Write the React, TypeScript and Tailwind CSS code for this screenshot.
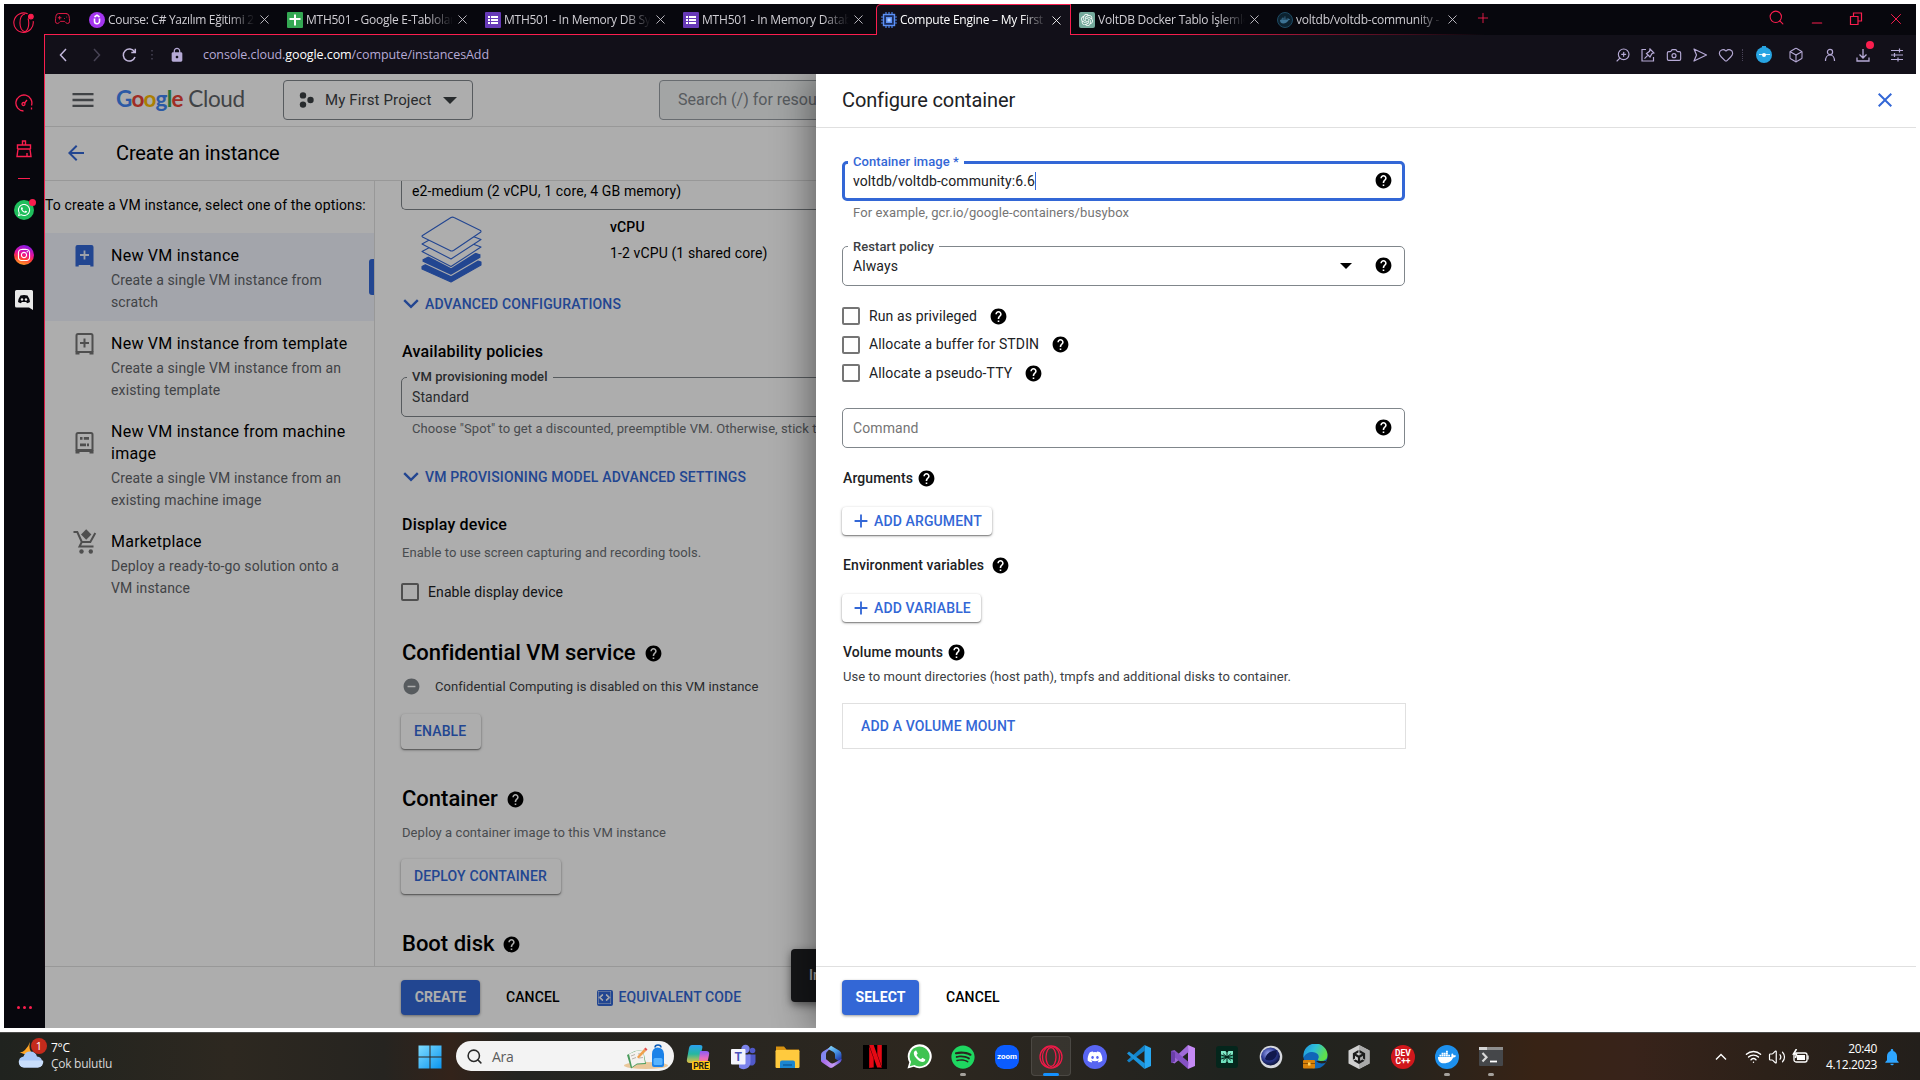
import React, { ReactNode } from "react";
import {
  MdHelp, MdMenu, MdArrowBack, MdClose, MdAdd, MdRemoveCircle, MdCode, MdLock, MdNotifications,
} from "react-icons/md";
import { FaWhatsapp, FaDiscord, FaSpotify, FaDocker, FaInstagram, FaUnity } from "react-icons/fa6";
import { SiNetflix, SiOpenai } from "react-icons/si";
import {
  Search, Copy, Minus, X, Plus, ZoomIn, Camera, SendHorizontal, Heart, Box, UserRound, Gamepad2, Wifi, Volume2,
} from "lucide-react";

/* ---------- shared bits ---------- */

const Help = ({ className = "" }: { className?: string }) => (
  <MdHelp size={19} className={"shrink-0 text-black " + className} />
);

const Checkbox = () => <span className="h-[18px] w-[18px] shrink-0 rounded-[2px] border-2 border-[#757575]" />;

const Chevron = () => (
  <svg width="16" height="10" viewBox="0 0 16 10" className="shrink-0">
    <path d="M1.2 1.2 8 7.800l6.800-6.600" fill="none" stroke="#3367d6" strokeWidth="2.400" />
  </svg>
);

/* ---------- browser side bar ---------- */

const OperaGx = ({ size }: { size: number }) => (
  <svg width={size} height={size} viewBox="0 0 24 24" fill="none" stroke="#fa1e4e" strokeWidth="1.200">
    <path d="M16 2A10.600 10.600 0 1 0 22 10" />
    <path d="M13 2.200C8.600 3 7.600 8 7.600 12s1.500 8.400 5.400 9.600" />
    <path d="M13 21.600c3.400-1.500 4.200-6 4.200-9.600 0-2-.2-3.600-.8-5" />
    <circle cx="19.500" cy="5" r="2.600" fill="#fa1e4e" />
  </svg>
);

function SideBar() {
  return (
    <div className="flex w-10 shrink-0 flex-col items-center bg-[#07070d] text-[#fa1e4e]">
      <div className="mt-[8px] h-[22px]"><OperaGx size={22} /></div>
      <svg className="mt-[60px]" width="18" height="18" viewBox="0 0 18 18" fill="none" stroke="#fa1e4e" strokeWidth="1.300">
        <path d="M8.500 17A8 8 0 1 1 16.500 11.500" /><circle cx="8.500" cy="10" r="1.500" /><path d="m9.500 9 2.500-3M16.500 13.500v2" />
      </svg>
      <svg className="mt-[28px]" width="16" height="18" viewBox="0 0 16 18" fill="none" stroke="#fa1e4e" strokeWidth="1.400">
        <path d="M6.500 5V1h3v4M1.500 9V5h13v4M1.500 9h13M2 9l-1 7.500h14L14 9M11 16.500V13" />
      </svg>
      <div className="mt-[20px] h-px w-3 bg-[#fa1e4e]" />
      <div className="relative mt-[21px] flex h-5 w-5 items-center justify-center rounded-full bg-[#1fbe5c]">
        <FaWhatsapp size={14} className="text-white" />
        <span className="absolute -right-[2px] -top-[1px] h-[7px] w-[7px] rounded-full bg-[#fa1e4e]" />
      </div>
      <div className="mt-[25px] flex h-5 w-5 items-center justify-center rounded-full bg-[linear-gradient(195deg,#7a1af0_5%,#e8139a_45%,#ff3a3a_65%,#ffc020)]">
        <FaInstagram size={14} className="text-white" />
      </div>
      <svg className="mt-[25px]" width="18" height="20" viewBox="0 0 18 20">
        <path d="M1.500 0h15A1.500 1.500 0 0 1 18 1.500V20l-4-2.500H1.500A1.500 1.500 0 0 1 0 16v-14.500A1.500 1.500 0 0 1 1.500 0Z" fill="#e8e8e8" />
        <path d="M5.500 5.500Q9 4.500 12.500 5.500 14.700 8.500 15 12q-1.500 1-3 1.200l-.8-1.200H6.800L6 13.200Q4.500 13 3 12 3.300 8.500 5.500 5.500Z" fill="#07070d" />
        <circle cx="7" cy="9.500" r="1.200" fill="#e8e8e8" /><circle cx="11" cy="9.500" r="1.200" fill="#e8e8e8" />
      </svg>
      <div className="mb-[19px] mt-auto flex gap-[3px]">
        {[0, 1, 2].map((i) => <span key={i} className="h-[3px] w-[3px] rounded-full bg-[#fa1e4e]" />)}
      </div>
    </div>
  );
}

/* ---------- tab strip ---------- */

const ListIcon = () => (
  <svg width="16" height="16" viewBox="0 0 16 16">
    <rect width="16" height="16" rx="1" fill="#673ab7" />
    <path d="M3 4h2v2H3zm0 3h2v2H3zm0 3h2v2H3zm3-6h7v2H6zm0 3h7v2H6zm0 3h7v2H6z" fill="#fff" />
  </svg>
);

const tabs: { title: string; icon: ReactNode; active?: boolean; spacing: string }[] = [
  {
    title: "Course: C# Yazılım Eğitimi 2", spacing: "tracking-[-0.3px]",
    icon: (
      <span className="flex h-4 w-4 items-center justify-center rounded-full bg-[#a435f0]">
        <svg width="8" height="11" viewBox="0 0 8 11" fill="none" stroke="#fff" strokeWidth="1.600">
          <path d="M1.500 4.500v2.700a2.500 2.500 0 0 0 5 0V4.500M1.500 3 4 1.200 6.500 3" />
        </svg>
      </span>
    ),
  },
  {
    title: "MTH501 - Google E-Tablolar", spacing: "tracking-[-0.26px]",
    icon: (
      <svg width="16" height="16" viewBox="0 0 16 16">
        <rect width="16" height="16" rx="1" fill="#34a853" /><path d="M7 2.500h2V6h4.500v2H9v5.500H7V8H2.500V6H7z" fill="#fff" />
      </svg>
    ),
  },
  { title: "MTH501 - In Memory DB Systems", spacing: "tracking-[-0.26px]", icon: <ListIcon /> },
  { title: "MTH501 - In Memory Database", spacing: "tracking-[-0.2px]", icon: <ListIcon /> },
  {
    title: "Compute Engine – My First Project", active: true, spacing: "tracking-[-0.23px]",
    icon: (
      <svg width="16" height="16" viewBox="0 0 16 16" fill="none">
        <path d="M5 0v16M8 0v16M11 0v16M0 5h16M0 8h16M0 11h16" stroke="#4a80e8" strokeWidth="1.200" />
        <rect x="2.500" y="2.500" width="11" height="11" fill="#1b2c5c" stroke="#5b90f5" strokeWidth="1.400" />
        <rect x="5" y="5" width="6" height="6" fill="#5b90f5" /><rect x="6.500" y="6.500" width="3" height="3" fill="#aecbfa" />
      </svg>
    ),
  },
  {
    title: "VoltDB Docker Tablo İşlemleri", spacing: "tracking-[-0.24px]",
    icon: <span className="flex h-4 w-4 items-center justify-center rounded-[2px] bg-[#74aa9c]"><SiOpenai size={12} color="#fff" /></span>,
  },
  {
    title: "voltdb/voltdb-community - Docker", spacing: "tracking-[-0.23px]",
    icon: <span className="flex h-4 w-4 items-center justify-center rounded-full border border-[#1d4a63] bg-[#0c2230]"><FaDocker size={10} color="#3d7395" /></span>,
  },
];

function TabStrip() {
  return (
    <div className="relative flex h-[31px] bg-[#07070d]">
      <div className="absolute inset-x-0 bottom-0 h-px bg-[linear-gradient(90deg,#fa1e4e_60%,#fa1e4e00_77%)]" />
      <Gamepad2 size={17} strokeWidth={1.400} className="ml-[10px] mr-[10px] mt-[6px] text-[#e01a46]" />
      {tabs.map((t) => (
        <div
          key={t.title}
          className={
            "relative flex shrink-0 items-center " +
            (t.active
              ? "ml-[3px] h-[31px] w-[195px] rounded-tl-[5px] border-l border-r border-t border-[#fa1e4e] bg-[#121019] pl-[4px] text-white"
              : "h-[31px] w-[198px] pl-2 text-[#cfcdd3]")
          }
        >
          {t.icon}
          <span
            className={
              "ml-[3px] w-[147px] shrink-0 overflow-hidden whitespace-nowrap font-['Open_Sans',sans-serif] text-[12px] [mask-image:linear-gradient(90deg,#000_82%,transparent_100%)] " + t.spacing
            }
          >
            {t.title}
          </span>
          <X size={15} strokeWidth={1.400} className="ml-[2px] shrink-0" />
        </div>
      ))}
      <Plus size={16} strokeWidth={1.300} className="ml-[8px] mt-[6px] text-[#fa1e4e]" />
      <div className="ml-auto mr-[12px] flex items-center gap-[24px] pb-[1px] text-[#fa1e4e]">
        <Search size={17} strokeWidth={1.500} className="-mt-[3px]" />
        <Minus size={16} strokeWidth={1.800} className="translate-y-[4px]" />
        <svg width="14" height="14" viewBox="0 0 14 14" fill="none" stroke="currentColor" strokeWidth="1.200">
          <path d="M1.500 4.500h7.500v8h-7.500zM4.500 4.500v-3.500h8v8H9" />
        </svg>
        <X size={18} strokeWidth={1.300} className="-mr-[1px]" />
      </div>
    </div>
  );
}

function AddressBar() {
  return (
    <div className="flex h-[39px] items-center bg-[#121019] text-[#b6aad6]">
      <svg width="114" height="16" viewBox="0 0 114 16" fill="none" stroke="#c3b8dd" strokeWidth="1.500" className="-mr-[4px] ml-[14px]">
        <path d="M7 2 1.500 8 7 14" />
        <path d="m35 2 5.500 6L35 14" opacity=".3" />
        <path d="M75.500 5A6 6 0 1 0 76 10M76.300 1.800v3.800h-4" />
        <path d="M93 3v10" strokeDasharray="1.500 2.500" opacity=".3" />
      </svg>
      <MdLock size={16} />
      <div className="ml-[18px] mt-[1px] whitespace-nowrap font-['Open_Sans',sans-serif] text-[12.500px] tracking-[-0.08px]">
        console.cloud.<span className="text-white">google.com</span>/compute/instancesAdd
      </div>
      <div className="ml-auto mr-[12px] flex items-center">
        <ZoomIn size={16} strokeWidth={1.700} className="-scale-x-100" />
        <svg width="14" height="14" viewBox="0 0 14 14" className="ml-[10px]" fill="none" stroke="currentColor" strokeWidth="1.200">
          <path d="M5 1.500H1v11.500h11.500V9M9 1l4 4-2 .5L9 9 5.500 5.500 8.500 3.300ZM7 7.200l-3.500 3.500" />
        </svg>
        <Camera size={16} strokeWidth={1.700} className="ml-[11px]" />
        <svg width="15" height="14" viewBox="0 0 15 14" className="ml-[11px]" fill="none" stroke="currentColor" strokeWidth="1.200" strokeLinejoin="round">
          <path d="M1 1 13.500 7 1 13l2.500-6Z" />
        </svg>
        <Heart size={16} strokeWidth={1.700} className="ml-[10px]" />
        <span className="ml-[8px] mr-[13px] h-3 border-l border-dotted border-[#4a4458]" />
        <span className="relative flex h-4 w-4 items-center justify-center rounded-full bg-[#27a4e2]">
          <span className="absolute -top-[1px] h-[2px] w-[4px] bg-[#27a4e2]" />
          <span className="h-[1.500px] w-[11px] bg-white/80" /><span className="absolute h-[4px] w-[4px] rounded-full bg-white" />
        </span>
        <Box size={16} strokeWidth={1.600} className="ml-[16px]" />
        <svg width="12" height="14" viewBox="0 0 12 14" className="ml-[20px]" fill="none" stroke="currentColor" strokeWidth="1.200">
          <circle cx="6" cy="4" r="2.600" /><path d="M1.500 13c0-3 1.500-6 4.500-6s4.500 3 4.500 6" />
        </svg>
        <span className="relative ml-[20px]">
          <svg width="14" height="14" viewBox="0 0 14 14" fill="none" stroke="currentColor" strokeWidth="1.300">
            <path d="M7 1v8.500M3.500 6.500 7 10l3.500-3.500M1 9.500V13h12V9.500" />
          </svg>
          <span className="absolute -right-[4px] -top-[7px] h-2 w-2 rounded-full bg-[#fa1e4e]" />
        </span>
        <svg width="14" height="14" viewBox="0 0 14 14" className="ml-[20px]" fill="none" stroke="currentColor" strokeWidth="1.200">
          <path d="M1 2.500h12M1 7h12M1 11.500h12M9.500.5v4M4.500 5v4M8 9.500v4" />
        </svg>
      </div>
    </div>
  );
}

/* ---------- console page ---------- */

const VmIcon = ({ kind }: { kind: "solid" | "outline" | "image" }) => (
  <svg width="20" height="24" viewBox="0 0 20 24" fill="none">
    {kind === "solid" && (
      <>
        <path d="M2.500 1h14A2 2 0 0 1 18.500 3v19.500h-3.200V21H3.700v1.500H.5V3A2 2 0 0 1 2.500 1Z" fill="#3367d6" />
        <path d="M9.500 6.500v9M5 11h9" stroke="#e8edfa" strokeWidth="1.800" />
      </>
    )}
    {kind !== "solid" && (
      <>
        <rect x="1.500" y="2" width="16" height="18" rx="1.500" stroke="#757575" strokeWidth="2" />
        <path d="M.5 19h4v3.500h-4zM14.500 19h4v3.500h-4z" fill="#757575" />
      </>
    )}
    {kind === "outline" && <path d="M9.500 6.500v9M5 11h9" stroke="#757575" strokeWidth="2" />}
    {kind === "image" && <path d="M5 6h2.500v2.800H5zM8.800 6H14v2.800H8.800zM5 12.500h6v2.800H5zM12 12.500h2v2.800h-2zM1 18h17v2.500H1z" fill="#757575" />}
  </svg>
);

const CartIcon = () => (
  <svg width="24" height="26" viewBox="0 0 24 26" fill="none" stroke="#757575" strokeWidth="2">
    <path d="M.5 3h3.800l4.500 10h8.500l5-9M8.800 13 6.500 17.500h14" />
    <path d="m13.200.3 5.200 5.200-5.200 5.200L8 5.500Z" fill="#757575" stroke="none" />
    <circle cx="8.500" cy="22.500" r="2.200" fill="#757575" stroke="none" /><circle cx="17.800" cy="22.500" r="2.200" fill="#757575" stroke="none" />
  </svg>
);

function NavItem({ icon, title, desc, active, iconClass = "" }: { icon: ReactNode; title: ReactNode; desc: ReactNode; active?: boolean; iconClass?: string }) {
  return (
    <div className={"relative flex pb-2 pt-[11px] " + (active ? "bg-[#f0f3fc]" : "")}>
      <div className={"ml-[28px] flex w-[24px] shrink-0 justify-center " + iconClass}>{icon}</div>
      <div className="ml-[14px] mt-px whitespace-nowrap">
        <div className="text-[16px] leading-[22px] tracking-[0.24px] text-black">{title}</div>
        <div className="mt-[2px] text-[14px] leading-[22px] tracking-[0.13px] text-[#5f6368]">{desc}</div>
      </div>
      {active && <span className="absolute right-0 top-[26px] h-9 w-[5px] rounded-l-[3px] bg-[#3367d6]" />}
    </div>
  );
}

function InstanceNav() {
  return (
    <div className="w-[330px] shrink-0 border-r border-[#e0e0e0]">
      <div className="h-[52px] whitespace-nowrap pt-[14px] text-[14px] leading-[20px] tracking-[0.14px] text-black">
        To create a VM instance, select one of the options:
      </div>
      <NavItem active icon={<VmIcon kind="solid" />} title="New VM instance" desc={<>Create a single VM instance from<br />scratch</>} />
      <NavItem icon={<VmIcon kind="outline" />} title="New VM instance from template" desc={<>Create a single VM instance from an<br />existing template</>} />
      <NavItem iconClass="mt-[11px]" icon={<VmIcon kind="image" />} title={<>New VM instance from machine<br />image</>} desc={<>Create a single VM instance from an<br />existing machine image</>} />
      <NavItem iconClass="-mt-px" icon={<CartIcon />} title="Marketplace" desc={<>Deploy a ready-to-go solution onto a<br />VM instance</>} />
    </div>
  );
}

const LayersIcon = () => (
  <svg width="64" height="68" viewBox="0 0 64 68" stroke="#3367d6" strokeWidth="1.100" strokeLinejoin="round">
    <path d="M2 50.500 31 35l30 11v3L31 66 2 53Z" fill="#3367d6" />
    <path d="M2 43 31 28l30 10v4L31 59.500 2 46Z" fill="#3367d6" stroke="#fff" />
    <path d="M2 35.500 31 20l30 11.500L31 50.500Z" fill="#fff" stroke="#fff" strokeWidth="3" />
    <path d="M2 35.500 31 20l30 11L31 50.500Z" fill="#fff" />
    <path d="M2 28 31 12l30 11.500-30 19.500Z" fill="#fff" />
    <path d="M2.500 19.500 31 1.500q1.500-.8 3 0L60.500 14.500q1 1 0 1.800L33.500 34.500q-2 1-3.500 0L2.500 21Q1.500 20.300 2.500 19.500Z" fill="#fff" />
  </svg>
);

const RaisedButton = ({ children, className }: { children: ReactNode; className: string }) => (
  <div className={"flex items-center rounded-[4px] text-[14px] font-medium tracking-[0.13px] text-[#3367d6] shadow-[0_1px_3px_rgba(0,0,0,0.35),0_1px_1px_rgba(0,0,0,0.3)] " + className}>
    {children}
  </div>
);

function InstanceForm() {
  return (
    <div className="flex-1 pl-[26px] text-black">
      <div className="h-[29px] w-[600px] rounded-bl-[5px] border-b border-l border-[#80868b] pl-[10px] text-[14px] leading-[20px] tracking-[0.13px]">
        e2-medium (2 vCPU, 1 core, 4 GB memory)
      </div>
      <div className="flex h-[80px]">
        <div className="ml-[19px] mt-[6px] w-[190px]"><LayersIcon /></div>
        <div className="text-[14px] leading-[20px] tracking-[0.12px]">
          <div className="mt-[7px] font-medium">vCPU</div>
          <div className="mt-[6px]">1-2 vCPU (1 shared core)</div>
        </div>
      </div>
      <div className="mt-[4px] flex h-5 items-center gap-[6px] pl-[2px] text-[14px] font-medium tracking-[0.15px] text-[#3367d6]">
        <Chevron />ADVANCED CONFIGURATIONS
      </div>
      <div className="ml-px mt-[26px] h-6 text-[16px] font-medium leading-6 tracking-[0.18px]">Availability policies</div>
      <div className="relative mt-[13px] flex h-10 w-[600px] items-center rounded-[5px] border border-[#80868b] pl-[10px] text-[14px] tracking-[0.1px] text-[#3c4043]">
        <span className="absolute -top-[9px] left-[5px] bg-white px-[5px] text-[13px] font-medium leading-4 tracking-[0.08px] text-[#3c4043]">VM provisioning model</span>
        Standard
      </div>
      <div className="mt-[2px] whitespace-nowrap pl-[11px] text-[13px] leading-5 tracking-[0.07px] text-[#6b6f74]">
        Choose "Spot" to get a discounted, preemptible VM. Otherwise, stick to
      </div>
      <div className="mt-[28px] flex h-5 items-center gap-[6px] pl-[2px] text-[14px] font-medium tracking-[0.15px] text-[#3367d6]">
        <Chevron />VM PROVISIONING MODEL ADVANCED SETTINGS
      </div>
      <div className="ml-px mt-[26px] h-6 text-[16px] font-medium leading-6 tracking-[0.18px]">Display device</div>
      <div className="ml-px mt-[6px] text-[13px] leading-5 tracking-[0.07px] text-[#6b6f74]">Enable to use screen capturing and recording tools.</div>
      <div className="mt-[19px] flex h-5 items-center gap-[9px] text-[14px] tracking-[0.1px] text-[#202124]"><Checkbox />Enable display device</div>
      <div className="ml-px mt-[36px] flex h-7 items-center text-[22px] font-medium tracking-[-0.04px]">
        Confidential VM service<Help className="ml-2 mt-[2px]" />
      </div>
      <div className="mt-[11px] flex h-5 items-center text-[13px] tracking-[0.07px] text-[#3c4043]">
        <MdRemoveCircle size={19} className="-mt-[2px] ml-px mr-[14px] text-[#80868b]" />Confidential Computing is disabled on this VM instance
      </div>
      <RaisedButton className="mt-[17px] h-[35px] w-20 pl-[13px]">ENABLE</RaisedButton>
      <div className="ml-px mt-[35px] flex h-7 items-center text-[22px] font-medium">Container<Help className="ml-2 mt-[2px]" /></div>
      <div className="ml-px mt-[11px] text-[13px] leading-5 tracking-[0.07px] text-[#6b6f74]">Deploy a container image to this VM instance</div>
      <RaisedButton className="mt-[16px] h-[35px] w-40 pl-[13px]">DEPLOY CONTAINER</RaisedButton>
      <div className="ml-px mt-[35px] flex h-7 items-center text-[22px] font-medium">Boot disk<Help className="ml-2 mt-[2px]" /></div>
    </div>
  );
}

function ConsolePage() {
  return (
    <div className="flex min-w-0 flex-1 flex-col bg-white">
      <div className="flex h-[53px] items-center border-b border-[#e0e0e0]">
        <MdMenu size={28} className="ml-[24px] text-[#5f6368]" />
        <div className="-mt-[3px] ml-[19px] w-[167px] whitespace-nowrap font-['Lato',sans-serif] text-[22.500px] tracking-[-0.3px] text-[#5f6368]">
          <span className="font-bold tracking-[-0.800px]">
            <span className="text-[#4285f4]">G</span><span className="text-[#ea4335]">o</span><span className="text-[#fbbc04]">o</span>
            <span className="text-[#4285f4]">g</span><span className="text-[#34a853]">l</span><span className="text-[#ea4335]">e</span>
          </span>{" "}
          Cloud
        </div>
        <div className="flex h-10 w-[190px] shrink-0 items-center rounded-[4px] border border-[#80868b] pl-[15px] text-[15px] tracking-[0.13px] text-[#3c4043]">
          <svg width="15" height="16" viewBox="0 0 15 16" fill="#3c4043" className="mr-[11px]">
            <circle cx="4" cy="3.400" r="3.200" /><circle cx="4" cy="12.600" r="3.200" /><circle cx="11.500" cy="8" r="3.200" />
          </svg>
          My First Project
          <span className="ml-[11px] border-x-[7px] border-t-[7px] border-x-transparent border-t-[#3c4043]" />
        </div>
        <div className="ml-[186px] flex h-10 flex-1 items-center rounded-[4px] border border-[#9aa0a6] bg-[#f1f3f4] pl-[18px] text-[16px] text-[#80868b]">
          Search (/) for resources
        </div>
      </div>
      <div className="flex h-[54px] items-center border-b border-[#e0e0e0] pb-[2px] text-[20px] tracking-[-0.13px] text-black">
        <MdArrowBack size={24} className="ml-[19px] mr-[28px] text-[#3367d6]" />Create an instance
      </div>
      <div className="flex h-[785px] overflow-hidden">
        <InstanceNav />
        <InstanceForm />
      </div>
      <div className="flex flex-1 items-center border-t border-[#e0e0e0] pl-[356px] text-[14px] font-medium tracking-[0.1px] text-black">
        <div className="flex h-[35px] w-[79px] items-center justify-center rounded-[4px] bg-[#3367d6] font-bold text-white shadow-[0_1px_3px_rgba(0,0,0,0.4)]">CREATE</div>
        <span className="ml-[26px]">CANCEL</span>
        <span className="ml-[37px] flex h-4 w-4 items-center justify-center rounded-[2px] bg-[#3367d6]"><MdCode size={13} color="#fff" strokeWidth={1.500} /></span>
        <span className="ml-[6px] whitespace-nowrap text-[#3367d6]">EQUIVALENT CODE</span>
      </div>
    </div>
  );
}

/* ---------- configure container drawer ---------- */

function Field({ label, children, className = "", labelClass = "" }: { label?: string; children: ReactNode; className?: string; labelClass?: string }) {
  return (
    <div className={"relative flex h-10 w-[563px] items-center rounded-[5px] text-[14px] tracking-[0.1px] " + className}>
      {label && <span className={"absolute bg-white px-[5px] text-[13px] font-medium leading-4 tracking-[0.06px] " + labelClass}>{label}</span>}
      {children}
    </div>
  );
}

function CheckRow({ label, className }: { label: string; className: string }) {
  return (
    <div className={"flex items-center " + className}>
      <Checkbox /><span className="ml-[9px] text-[14px] tracking-[0.12px]">{label}</span><Help className="ml-[12px]" />
    </div>
  );
}

function Drawer() {
  return (
    <div className="flex w-[1100px] flex-col bg-white text-[#202124] shadow-[-4px_0_36px_rgba(0,0,0,0.45)]">
      <div className="flex h-[54px] shrink-0 items-center justify-between border-b border-[#e0e0e0] pb-[1px] pl-[26px] pr-[19px] text-[20px] tracking-[-0.12px]">
        Configure container<MdClose size={24} className="text-[#3367d6]" />
      </div>
      <div className="flex-1 pl-[26px]">
        <Field label="Container image *" className="mt-[33px] border-[3px] border-[#3367d6] pl-[8px] pr-[9px]" labelClass="left-[3px] -top-[10px] text-[#3367d6]">
          <span>voltdb/voltdb-community:6.6</span><span className="h-[18px] w-px bg-[#3367d6]" />
          <Help className="-mt-[2px] ml-auto" />
        </Field>
        <div className="mt-[2px] pl-[11px] text-[13px] leading-5 tracking-[0.09px] text-[#757575]">For example, gcr.io/google-containers/busybox</div>
        <Field label="Restart policy" className="mt-[23px] border border-[#80868b] pl-[10px] pr-[11px]" labelClass="left-[5px] -top-[8px] text-[#3c4043]">
          Always
          <span className="ml-auto mr-[22px] border-x-[6px] border-t-[6px] border-x-transparent border-t-black" /><Help className="-mt-[2px]" />
        </Field>
        <CheckRow label="Run as privileged" className="mt-[16px] h-[28px]" />
        <CheckRow label="Allocate a buffer for STDIN" className="h-[29px]" />
        <CheckRow label="Allocate a pseudo-TTY" className="h-[28px]" />
        <Field className="mt-[21px] border border-[#80868b] pl-[10px] pr-[11px]"><span className="text-[#757575]">Command</span><Help className="-mt-[2px] ml-auto" /></Field>
        <div className="ml-px mt-[20px] flex h-5 items-center text-[14px] font-medium tracking-[0.1px]">Arguments<Help className="ml-[4px]" /></div>
        <RaisedButton className="mt-[19px] h-[28px] w-[150px] pl-[8px]"><MdAdd size={22} className="mr-[2px]" />ADD ARGUMENT</RaisedButton>
        <div className="ml-px mt-[20px] flex h-5 items-center text-[14px] font-medium tracking-[0.1px]">Environment variables<Help className="ml-[7px]" /></div>
        <RaisedButton className="mt-[19px] h-[28px] w-[139px] pl-[8px]"><MdAdd size={22} className="mr-[2px]" />ADD VARIABLE</RaisedButton>
        <div className="ml-px mt-[20px] flex h-5 items-center text-[14px] font-medium tracking-[0.1px]">Volume mounts<Help className="ml-[4px]" /></div>
        <div className="ml-px mt-[5px] text-[13px] leading-5 tracking-[0.07px] text-[#3c4043]">Use to mount directories (host path), tmpfs and additional disks to container.</div>
        <div className="mt-[16px] flex h-[46px] w-[564px] items-center border border-[#e0e0e0] pl-[18px] text-[14px] font-medium tracking-[0.15px] text-[#3367d6]">ADD A VOLUME MOUNT</div>
      </div>
      <div className="flex h-[62px] items-center border-t border-[#e0e0e0] pl-[26px] text-[14px] font-medium tracking-[0.1px]">
        <div className="flex h-[35px] w-[77px] items-center justify-center rounded-[4px] bg-[#3367d6] font-bold text-white shadow-[0_1px_3px_rgba(0,0,0,0.4)]">SELECT</div>
        <span className="ml-[27px] text-black">CANCEL</span>
      </div>
    </div>
  );
}

/* ---------- taskbar ---------- */

const apps: { name: string; icon: ReactNode; mark?: "dot" | "active" }[] = [
  {
    name: "copilot",
    icon: (
      <svg width="26" height="28" viewBox="0 0 26 28">
        <defs>
          <linearGradient id="cpa" x1="0" y1="0" x2="0" y2="1"><stop offset="0" stopColor="#2aa0f0" /><stop offset=".5" stopColor="#27b7a0" /><stop offset="1" stopColor="#e8c03c" /></linearGradient>
          <linearGradient id="cpb" x1="0" y1="0" x2="0" y2="1"><stop offset="0" stopColor="#8a5cf5" /><stop offset=".5" stopColor="#e66bc0" /><stop offset="1" stopColor="#ff8a5c" /></linearGradient>
        </defs>
        <path d="M6 2h8q3 0 2.300 3l-3 12q-.7 3-4 3H4q-4 0-3-4L3 5q.7-3 3-3Z" fill="url(#cpa)" />
        <path d="M14 8h6q4 0 3 4l-1.500 7q-.7 3-4 3H9q3-1 4-5Z" fill="url(#cpb)" />
        <rect x="6" y="18" width="18" height="9" rx="1.500" fill="#ffc619" />
        <text x="15" y="25.500" textAnchor="middle" fontFamily="Roboto" fontWeight="700" fontSize="8.500" fill="#1a1a1a">PRE</text>
      </svg>
    ),
  },
  {
    name: "teams",
    icon: (
      <svg width="26" height="26" viewBox="0 0 26 26">
        <circle cx="15.500" cy="5" r="4.200" fill="#7b83eb" /><circle cx="22.500" cy="6.500" r="2.800" fill="#5059c9" />
        <path d="M18 10.500h7.500V18a4 4 0 0 1-6 3Z" fill="#5059c9" /><path d="M9 10.500h11.500V18a7 7 0 0 1-11.500 5.500Z" fill="#7b83eb" />
        <rect x="1" y="5" width="14.500" height="15.500" rx="1" fill="#f4f5fc" />
        <text x="8.200" y="17" textAnchor="middle" fontFamily="Roboto" fontWeight="700" fontSize="12" fill="#4b53bc">T</text>
      </svg>
    ),
  },
  {
    name: "explorer",
    icon: (
      <svg width="25" height="24" viewBox="0 0 25 24">
        <path d="M1 1.500h8l2.500 3H24V12H1z" fill="#d89210" /><rect x="0.500" y="5" width="24" height="18" rx="1.200" fill="#ffca3e" />
        <path d="M5 23v-5.500A2 2 0 0 1 7 15.500h11a2 2 0 0 1 2 2V23Z" fill="#1b86d1" /><path d="M8 20h9" stroke="#0d5ea0" strokeWidth="1.500" />
      </svg>
    ),
  },
  {
    name: "m365",
    icon: (
      <svg width="22" height="24" viewBox="0 0 22 24">
        <defs>
          <linearGradient id="m3a" x1="0" y1="0" x2=".6" y2="1"><stop offset="0" stopColor="#8fdcf8" /><stop offset=".5" stopColor="#4a9be8" /><stop offset="1" stopColor="#2340b0" /></linearGradient>
          <linearGradient id="m3b" x1="0" y1="0" x2="1" y2="1"><stop offset="0" stopColor="#8f7af0" /><stop offset="1" stopColor="#6f9cf0" /></linearGradient>
          <linearGradient id="m3c" x1="0" y1="0" x2="1" y2="0"><stop offset="0" stopColor="#a061e8" /><stop offset=".6" stopColor="#c79af2" /><stop offset="1" stopColor="#5b50d0" /></linearGradient>
        </defs>
        <path d="M12 1 3 6.500Q1 7.700 1 10v6l6 3.500q-1-3-1-6V9q0-2 2-3.200Z" fill="url(#m3b)" />
        <path d="m11 .8 8.500 5Q21.500 7 21.500 9.500V14q0 2-1.500 3l-5-3.500V9.500Q15 8 13.500 7L8 4Z" fill="url(#m3a)" />
        <path d="M1 15.500q0 1.500 1.500 2.300l7 4.700q1.500.8 3 0l7-4.500q1.500-1 2-3v-1L14 18q-2 1-4-.5l-3.500-3Z" fill="url(#m3c)" />
      </svg>
    ),
  },
  { name: "netflix", icon: <span className="flex h-6 w-6 items-center justify-center bg-black"><SiNetflix size={23} color="#e50914" /></span> },
  {
    name: "whatsapp",
    icon: (
      <svg width="25" height="25" viewBox="0 0 25 25">
        <path d="m.5 24.500 1.800-6.300a12 12 0 1 1 4.500 4.500Z" fill="#fff" /><path d="m2.800 22.200 1.300-4.500a10 10 0 1 1 3.300 3.300Z" fill="#3fc351" />
        <path d="M9.200 6.500c-.6-.5-2.400.8-2.400 2.700 0 3.600 5.500 8.800 8.700 8.800 1.800 0 3-1.500 2.800-2.600l-2.900-1.700-1.400 1.500c-2-.8-3.600-2.400-4.500-4.300l1.200-1.300Z" fill="#fff" />
      </svg>
    ),
  },
  { name: "spotify", mark: "dot", icon: <FaSpotify size={24} color="#1ed760" /> },
  { name: "zoom", icon: <span className="flex h-6 w-6 items-center justify-center rounded-[9px] bg-[#0b5cff] font-['Roboto'] text-[8px] font-bold leading-none text-white">zoom</span> },
  {
    name: "operagx", mark: "active",
    icon: (
      <svg width="24" height="24" viewBox="0 0 24 24" fill="none" stroke="#f01a48" strokeWidth="1.300">
        <circle cx="12" cy="12" r="11" /><ellipse cx="12" cy="12" rx="5" ry="9.500" /><path d="M10 1.500C4 4 3.500 8 3.500 12S4 20 10 22.500M14 1.500c6 2.500 6.500 6.500 6.500 10.500S20 20 14 22.500" />
      </svg>
    ),
  },
  { name: "discord", icon: <span className="flex h-6 w-6 items-center justify-center rounded-full bg-[#5865f2]"><FaDiscord size={16} color="#fff" /></span> },
  {
    name: "vscode",
    icon: (
      <svg width="24" height="24" viewBox="0 0 24 24">
        <path d="M17.500 0 24 3v18l-6.500 3Z" fill="#27a8f2" /><path d="M17.500 0 0 15.500l2 2L18 5.500Z" fill="#1382c8" /><path d="M17.500 24 0 8.500l2-2L18 18.500Z" fill="#1b94dc" />
      </svg>
    ),
  },
  {
    name: "visualstudio",
    icon: (
      <svg width="24" height="24" viewBox="0 0 24 24">
        <path d="m17 0 7 3v18l-7 3Z" fill="#c58af5" /><path d="M17 0 1 15V17.500L3.500 18.500 17.500 7Z" fill="#a06bd8" /><path d="M17 24 0 9V6l3.500-1L17.500 17Z" fill="#8552c4" /><path d="M0 6l4 1.500v9L0 18Z" fill="#6a3fa8" />
      </svg>
    ),
  },
  {
    name: "xsplit",
    icon: (
      <svg width="22" height="22" viewBox="0 0 22 22">
        <rect width="22" height="22" rx="3" fill="#04261c" />
        <path d="M5 5h4.500l1 1.500v3.500L5 8.500zM17 5h-4.500l-1 1.500v3.500L17 8.500z" fill="#7fe8c6" />
        <path d="m5 9.500 4.500 1.500L5 12.500zM17 9.500 12.500 11l4.500 1.500z" fill="#3fae8c" />
        <path d="M5 17h4.500l1-1.500V12L5 13.500zM17 17h-4.500l-1-1.500V12l5.500 1.500z" fill="#6fe0bd" />
        <path d="m7 7.500 8 7M15 7.500l-8 7" stroke="#04261c" strokeWidth=".9" />
      </svg>
    ),
  },
  {
    name: "cinema4d",
    icon: (
      <svg width="24" height="24" viewBox="0 0 24 24">
        <defs><radialGradient id="c4" cx=".4" cy=".35" r=".7"><stop offset="0" stopColor="#9fabf5" /><stop offset=".55" stopColor="#2c3a92" /><stop offset="1" stopColor="#0a0f30" /></radialGradient></defs>
        <circle cx="12" cy="12" r="11.300" fill="#d6d8de" /><ellipse cx="11.500" cy="11.500" rx="9.500" ry="9" fill="url(#c4)" /><path d="M6 14Q8 6 18 5q-1 2 0 4-2 6-7 6.500-3 .500-5-1.500Z" fill="#10184c" />
      </svg>
    ),
  },
  {
    name: "edge",
    icon: (
      <svg width="25" height="25" viewBox="0 0 25 25">
        <defs><linearGradient id="eg" x1="0" y1="0" x2="1" y2=".4"><stop offset="0" stopColor="#1c8fe0" /><stop offset=".5" stopColor="#2fc0d8" /><stop offset="1" stopColor="#5fe04a" /></linearGradient></defs>
        <circle cx="12.500" cy="12.500" r="12" fill="#1066b8" />
        <path d="M.5 12A12 12 0 0 1 24.500 11q0 6-7 6-3 0-2.500-2 1.500-2 0-4.500C12 6.500 3 7 .5 14Z" fill="url(#eg)" />
        <path d="M13 17q2.500 3.500 9.500 2L24.500 14v3l-4 0Z" fill="#24231f" />
        <rect x="0" y="16" width="12" height="8.500" rx="1" fill="#d9820a" /><path d="M0 19.500h12" stroke="#8a4e00" /><rect x="5" y="18.500" width="2.500" height="3" fill="#ffd35c" />
      </svg>
    ),
  },
  {
    name: "unity",
    icon: (
      <span className="relative flex h-6 w-[22px] items-center justify-center">
        <svg width="22" height="24" viewBox="0 0 22 24" className="absolute inset-0">
          <path d="m11 0 10.500 5.500v13L11 24 .5 18.500v-13Z" fill="#d0d0d0" /><path d="m11 0 10.500 5.500v13L11 24Z" fill="#aaa" />
        </svg>
        <FaUnity size={14} color="#1c1c1c" className="relative" />
      </span>
    ),
  },
  { name: "devcpp", icon: <span className="flex h-6 w-6 flex-col items-center justify-center rounded-full bg-[#d0171c] font-['Roboto'] text-[8.500px] font-bold leading-[8px] text-white"><span>DEV</span><span>C++</span></span> },
  { name: "docker", mark: "dot", icon: <span className="flex h-6 w-6 items-center justify-center rounded-full bg-[#1d90ed]"><FaDocker size={18} color="#fff" /></span> },
  {
    name: "terminal", mark: "dot",
    icon: (
      <svg width="24" height="20" viewBox="0 0 24 20">
        <rect width="24" height="19" rx="1" fill="#45474a" /><path d="M0 0h24v3H0z" fill="#8e8e8e" /><path d="M0 0h8v3H0z" fill="#d5d5d5" />
        <path d="m3.500 6 4 4.200-4 4.200" fill="none" stroke="#d8d8d8" strokeWidth="2.200" /><path d="M11 14.500h7" stroke="#fff" strokeWidth="1.800" />
      </svg>
    ),
  },
];

function Taskbar() {
  return (
    <div className="flex h-12 items-stretch border-t border-[#4b4b49] bg-[linear-gradient(90deg,#20231f_0%,#2d2820_12%,#262420_20%,#33231a_23.500%,#232421_27%,#2d271f_48%,#26241f_58%,#20231f_64%,#24231e_72%,#382315_80%,#38231a_85%,#2c2119_92%,#231f1b_100%)] font-['Open_Sans',sans-serif] text-[12px] text-white">
      <div className="relative ml-[18px] mt-[9px] w-[33px]">
        <svg width="27" height="27" viewBox="0 0 27 27">
          <path d="M12 0q-2 8 3 12H6L1 10q3 1 6-2 3.500-3.500 5-8Z" fill="#ffa526" />
          <path d="M6 25.500a5.500 5.500 0 0 1-.5-10.900A7 7 0 0 1 19 14.500a5.600 5.600 0 0 1 1 11Z" fill="#a9c8f7" />
          <path d="M6 25.500a5.500 5.500 0 0 1-5-7h24a5.500 5.500 0 0 1-5 7Z" fill="#c9defb" />
        </svg>
        <span className="absolute left-[13px] -top-[4px] flex h-4 w-4 items-center justify-center rounded-full bg-[#c42b1c] text-[11px]">1</span>
      </div>
      <div className="mt-[7px] w-[100px] leading-[16px] tracking-[-0.27px]">
        <div>7°C</div><div className="text-[#d8d8d8]">Çok bulutlu</div>
      </div>
      <svg width="24" height="24" viewBox="0 0 24 24" className="ml-[267px] mt-[12px]">
        <defs><linearGradient id="win" x1="0" y1="0" x2="1" y2="1"><stop offset="0" stopColor="#7fdcff" /><stop offset="1" stopColor="#0a95f0" /></linearGradient></defs>
        <path d="M.5.500h11v11H.5zm12 0h11v11h-11zm-12 12h11v11H.5zm12 0h11v11h-11z" fill="url(#win)" />
      </svg>
      <div className="ml-[14px] mt-[8px] flex h-[30px] w-[218px] items-center rounded-full bg-[#f3f3f3] pl-[10px] text-[14px] tracking-[-0.3px] text-[#5c5c5c]">
        <Search size={17} strokeWidth={2.200} className="mr-[9px] text-[#2a2a2a]" />Ara
        <svg width="46" height="30" viewBox="0 0 46 30" className="ml-auto mr-[5px]">
          <ellipse cx="23" cy="24.500" rx="22" ry="3.500" fill="#e9c79a" />
          <path d="m4 14 8-4 8-1 3 14-9 .500-6 4Z" fill="#4a9c5d" /><path d="m6 13 7-3 7-1 2 13-8 .500-5 3.500Z" fill="#f4f2ee" />
          <path d="m8 15 4-1.500M9 18l4-1.500M15 13l4-.500M16 17l4-.500" stroke="#b9b4ac" /><path d="m14 16 7-8 2 2-7.500 7.500Z" fill="#f0a04c" /><path d="m21 8 1.500-1.500 2 2L23 10Z" fill="#e34b4b" />
          <path d="M29 13q0-6 5.500-6.500 6 0 6.500 6.500V24q0 2-2 2H31q-2 0-2-2Z" fill="#1b82e8" /><path d="M32 6.500q0-2.500 3-2.500t3 2.500" fill="none" stroke="#0b5cb8" strokeWidth="1.500" /><rect x="30.500" y="17" width="9" height="7" rx="1.500" fill="#58b4ff" />
        </svg>
      </div>
      <div className="ml-[3px] flex">
        {apps.map((a) => (
          <div key={a.name} className="relative flex w-11 items-center justify-center">
            {a.mark === "active" && <span className="absolute left-[2px] top-[3px] h-10 w-10 rounded-[4px] border border-white/10 bg-white/[0.07]" />}
            <span className="relative">{a.icon}</span>
            {a.mark === "dot" && <span className="absolute bottom-[4px] h-[3px] w-[6px] rounded-full bg-[#a5a19c]" />}
            {a.mark === "active" && <span className="absolute bottom-[4px] h-[3px] w-4 rounded-full bg-[#1592ff]" />}
          </div>
        ))}
      </div>
      <div className="ml-auto flex items-center">
        <svg width="12" height="8" viewBox="0 0 12 8" fill="none" stroke="#fff" strokeWidth="1.400"><path d="m1 6.500 5-5 5 5" /></svg>
        <Wifi size={17} strokeWidth={2} className="ml-[18px]" />
        <Volume2 size={18} strokeWidth={1.600} className="ml-[6px]" />
        <svg width="17" height="15" viewBox="0 0 17 15" className="ml-[6px]" fill="none" stroke="#fff" strokeWidth="1.300">
          <rect x="2" y="4" width="13" height="9" rx="2" /><path d="M16 6.500v4" /><rect x="5" y="6" width="8" height="5" fill="#fff" stroke="none" /><path d="M4.500 0 1.500 5h3l-1 4" strokeWidth="1.600" />
        </svg>
        <div className="ml-[8px] w-[60px] text-right leading-[16px] tracking-[-0.37px]"><div>20:40</div><div>4.12.2023</div></div>
        <MdNotifications size={20} className="ml-[5px] mr-[18px] text-[#2ea5ff]" />
      </div>
    </div>
  );
}

/* ---------- desktop ---------- */

export default function App() {
  return (
    <div className="flex h-[1080px] w-[1920px] flex-col overflow-hidden bg-white font-['Roboto',sans-serif]">
      <div className="mb-1 ml-1 mr-1 mt-1 flex h-[1024px] shrink-0">
        <SideBar />
        <div className="flex min-w-0 flex-1 flex-col">
          <TabStrip />
          <div className="flex min-h-0 flex-1">
            <div className="w-px bg-[linear-gradient(180deg,#fa1e4e_0%,#c01a40_60%,#07070d_95%)]" />
            <div className="flex min-w-0 flex-1 flex-col">
              <AddressBar />
              <div className="relative flex min-h-0 flex-1 overflow-hidden">
                <ConsolePage />
                <div className="absolute bottom-[26px] left-[746px] flex h-[53px] w-[300px] items-center rounded-[4px] bg-[#202124] pl-[18px] text-[14px] font-medium text-[#e8eaed] shadow-[0_3px_8px_rgba(0,0,0,0.5)]">Instance</div>
                <div className="absolute inset-0 flex justify-end bg-black/32"><Drawer /></div>
              </div>
            </div>
          </div>
        </div>
      </div>
      <Taskbar />
    </div>
  );
}
